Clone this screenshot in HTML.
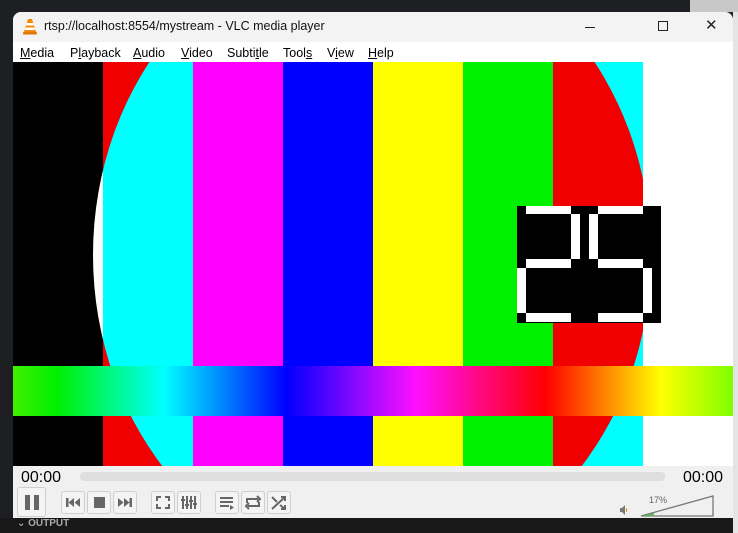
<!DOCTYPE html>
<html><head><meta charset="utf-8"><style>
*{margin:0;padding:0;box-sizing:border-box}
body{width:738px;height:533px;overflow:hidden;background:#1e1f22;position:relative;font-family:"Liberation Sans","DejaVu Sans",sans-serif}
.abs{position:absolute}
.menu span{position:absolute;top:4px;font-size:12.5px;color:#000}
.btn{position:absolute;top:490px;height:25px;background:#f4f4f4;border:1px solid #cfcfcf;border-radius:3px}
</style></head><body>
<div class="abs" style="left:690px;top:0;width:48px;height:12px;background:#c8c8c8"></div>
<div class="abs" style="left:733px;top:12px;width:5px;height:521px;background:#e4e4e4"></div>
<div class="abs" style="left:13px;top:12px;width:720px;height:506px;background:#f0f0f0;border-radius:8px 8px 0 0;overflow:hidden">
 <div class="abs" style="left:0;top:0;width:720px;height:30px;background:#f3f3f3"></div>
 <svg class="abs" style="left:9px;top:6px" width="16" height="17" viewBox="0 0 16 17"><path d="M6 1h4l4 13H2z" fill="#f08a00"/><path d="M4.8 5h6.4l.7 2.5H4.1zM3.6 9.5h8.8l.7 2.5H2.9z" fill="#fff"/><rect x="1" y="14" width="14" height="2.5" rx="1" fill="#e07800"/></svg>
 <div class="abs" style="left:31px;top:7px;font-size:12.5px;color:#111">rtsp://localhost:8554/mystream - VLC media player</div>
 <div class="abs" style="left:572px;top:15px;width:10px;height:1px;background:#222"></div>
 <div class="abs" style="left:645px;top:9px;width:10px;height:10px;border:1px solid #222"></div>
 <div class="abs" style="left:692px;top:4px;font-size:15px;color:#222">✕</div>
 <div class="menu abs" style="left:0;top:30px;width:720px;height:20px;background:#fff">
  <span style="left:7px"><u>M</u>edia</span><span style="left:57px">P<u>l</u>ayback</span><span style="left:120px"><u>A</u>udio</span><span style="left:168px"><u>V</u>ideo</span><span style="left:214px">Subti<u>t</u>le</span><span style="left:270px">Tool<u>s</u></span><span style="left:314px">V<u>i</u>ew</span><span style="left:355px"><u>H</u>elp</span>
 </div>
 <svg class="abs" style="left:0;top:50px" width="720" height="404" viewBox="13 62 720 404">
  <defs>
   <clipPath id="c"><ellipse cx="372" cy="255" rx="279" ry="320"/></clipPath>
   <linearGradient id="g" x1="13" x2="733" gradientUnits="userSpaceOnUse">
    <stop offset="0" stop-color="#40f000"/><stop offset=".06" stop-color="#00f000"/><stop offset=".21" stop-color="#00ffff"/><stop offset=".38" stop-color="#0000ff"/><stop offset=".56" stop-color="#ff10ff"/><stop offset=".74" stop-color="#ff0000"/><stop offset=".83" stop-color="#ff9000"/><stop offset=".9" stop-color="#ffff00"/><stop offset="1" stop-color="#80ff00"/>
   </linearGradient>
  </defs>
  <rect x="13" y="62" width="90" height="404" fill="#000"/><rect x="103" y="62" width="90" height="404" fill="#f00000"/><rect x="193" y="62" width="90" height="404" fill="#ff00ff"/><rect x="283" y="62" width="90" height="404" fill="#0000ff"/><rect x="373" y="62" width="90" height="404" fill="#ffff00"/><rect x="463" y="62" width="90" height="404" fill="#00f000"/><rect x="553" y="62" width="90" height="404" fill="#00ffff"/><rect x="643" y="62" width="90" height="404" fill="#fff"/>
  <g clip-path="url(#c)">
   <rect x="13" y="62" width="90" height="404" fill="#fff"/><rect x="103" y="62" width="90" height="404" fill="#00ffff"/><rect x="553" y="62" width="90" height="404" fill="#f00000"/>
  </g>
  <rect x="13" y="366" width="720" height="50" fill="url(#g)"/>
  <rect x="517" y="206" width="144" height="117" fill="#000"/>
  <g fill="#fff">
   <rect x="526" y="206" width="45" height="8"/><rect x="571" y="214" width="9" height="45"/><rect x="526" y="259" width="45" height="9"/><rect x="517" y="268" width="9" height="45"/><rect x="526" y="313" width="45" height="9"/>
   <rect x="598" y="206" width="45" height="8"/><rect x="589" y="214" width="9" height="45"/><rect x="598" y="259" width="45" height="9"/><rect x="643" y="268" width="9" height="45"/><rect x="598" y="313" width="45" height="9"/>
  </g>
 </svg>
 <div class="abs" style="left:8px;top:457px;font-size:16px;color:#000">00:00</div>
 <div class="abs" style="left:67px;top:460px;width:585px;height:9px;background:#dedede;border-radius:4px"></div>
 <div class="abs" style="left:670px;top:457px;font-size:16px;color:#000">00:00</div>
 <div class="btn" style="left:4px;top:475px;width:29px;height:30px"><div class="abs" style="left:7px;top:7px;width:5px;height:15px;background:#666"></div><div class="abs" style="left:16px;top:7px;width:5px;height:15px;background:#666"></div></div>
 <div class="btn" style="left:48px;top:479px;width:24px;height:23px"><svg width="22" height="21"><rect x="4" y="6" width="2.5" height="9" fill="#666"/><path d="M12 6v9L6.5 10.5zM18 6v9l-5.5-4.5z" fill="#666"/></svg></div>
 <div class="btn" style="left:74px;top:479px;width:24px;height:23px"><div class="abs" style="left:6px;top:5px;width:11px;height:11px;background:#666"></div></div>
 <div class="btn" style="left:100px;top:479px;width:24px;height:23px"><svg width="22" height="21"><rect x="15.5" y="6" width="2.5" height="9" fill="#666"/><path d="M4 6v9l5.5-4.5zM10 6v9l5.5-4.5z" fill="#666"/></svg></div>
 <div class="btn" style="left:138px;top:479px;width:24px;height:23px"><svg width="22" height="21"><path d="M5 9V5h4M13 5h4v4M17 12v4h-4M9 16H5v-4" fill="none" stroke="#666" stroke-width="2"/></svg></div>
 <div class="btn" style="left:164px;top:479px;width:24px;height:23px"><svg width="22" height="21"><path d="M5 4v13M9 4v13M13 4v13M17 4v13" stroke="#666" stroke-width="2"/><path d="M3 8h4M7 13h4M11 9h4M15 12h4" stroke="#666" stroke-width="2"/></svg></div>
 <div class="btn" style="left:202px;top:479px;width:24px;height:23px"><svg width="22" height="21"><path d="M4 6h13M4 10h13M4 14h9" stroke="#666" stroke-width="2"/><path d="M14 13l4 2.5-4 2.5z" fill="#666"/></svg></div>
 <div class="btn" style="left:228px;top:479px;width:24px;height:23px"><svg width="22" height="21"><path d="M5 11V7h11M15 4l3 3-3 3M17 10v4H6M7 11l-3 3 3 3" fill="none" stroke="#666" stroke-width="2"/></svg></div>
 <div class="btn" style="left:254px;top:479px;width:24px;height:23px"><svg width="22" height="21"><path d="M4 5l5 5M12 13l5 4M4 17L17 5M13 5h4v4M13 17h4v-4" fill="none" stroke="#666" stroke-width="2"/></svg></div>
 <div class="abs" style="left:607px;top:493px;width:5px;height:10px;background:#777;clip-path:polygon(0 30%,40% 30%,100% 0,100% 100%,40% 70%,0 70%)"></div>
 <div class="abs" style="left:613px;top:496px;width:1px;height:4px;background:#f08a00"></div>
 <svg class="abs" style="left:627px;top:482px" width="76" height="25"><path d="M1 22L73 2V22Z" fill="#f0f0f0" stroke="#777" stroke-width="1.3"/><path d="M2 22L14 19V22Z" fill="#5cb85c"/></svg>
 <div class="abs" style="left:636px;top:483px;font-size:9px;color:#666">17%</div>
</div>
<div class="abs" style="left:0;top:518px;width:733px;height:15px;background:#181818"></div>
<div class="abs" style="left:17px;top:518px;font-size:10px;font-weight:bold;color:#aaa">⌄ OUTPUT</div>
</body></html>
